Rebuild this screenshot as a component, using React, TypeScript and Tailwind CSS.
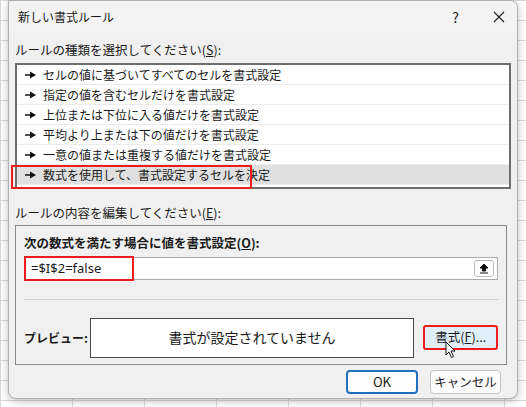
const rules = [
  "セルの値に基づいてすべてのセルを書式設定",
  "指定の値を含むセルだけを書式設定",
  "上位または下位に入る値だけを書式設定",
  "平均より上または下の値だけを書式設定",
  "一意の値または重複する値だけを書式設定",
  "数式を使用して、書式設定するセルを決定",
];

export default function App() {
  return (
    <div
      className="relative h-[407px] w-[526px] overflow-hidden bg-white text-[13px] text-[#1a1a1a] [background-image:linear-gradient(#d9d9d9_1px,transparent_1px),linear-gradient(90deg,#d9d9d9_1px,transparent_1px)] [background-size:72px_20px]"
      style={{ fontFamily: '"Noto Sans CJK JP", "Noto Sans", sans-serif' }}
    >
      <div className="absolute left-[8px] top-0 h-[399px] w-[510px] overflow-hidden rounded-b-[8px] rounded-tr-[8px] border border-[#b0b0b0] bg-[#f0f0f0] shadow-[0_2px_8px_rgba(0,0,0,0.25)]">
        <div className="flex h-[32px] items-center justify-between bg-[#f3f3f3] pl-[9px] pr-[12px]">
          <span className="text-[12px]">新しい書式ルール</span>
          <div className="flex items-center gap-[34px] text-[14px]">
            <span>?</span>
            <svg width="12" height="12" viewBox="0 0 12 12"><path d="M1 1L11 11M11 1L1 11" stroke="#222" strokeWidth="1.1" /></svg>
          </div>
        </div>
        <div className="px-[6px] pt-[8px]">
          <div className="text-[12.5px] leading-[18px]">ルールの種類を選択してください(<u>S</u>):</div>
          <div className="relative mt-[4px] border-2 border-[#6e6e6e] bg-white pb-[2px]">
            {rules.map((r, i) => (
              <div
                key={r}
                className={`flex h-[20px] items-center gap-[6px] border-b border-[#ececec] pl-[8px] text-[12px] ${i === 5 ? "bg-[#e0e0e0]" : ""}`}
              >
                <svg width="12" height="8" viewBox="0 0 12 8"><path d="M0 4H6" stroke="#111" strokeWidth="1.6" /><path d="M5 0.5L11 4L5 7.5Z" fill="#111" /></svg>
                <span>{r}</span>
              </div>
            ))}
            <div className="absolute left-[-6px] top-[100px] h-[24px] w-[241px] border-2 border-[#ee1c1c]" />
          </div>
          <div className="mt-[15px] text-[12.5px] leading-[18px]">ルールの内容を編集してください(<u>E</u>):</div>
          <div className="mr-[4px] mt-[3px] h-[140px] border border-[#888] bg-[#f0f0f0] px-[8px]">
            <div className="mt-[8px] text-[12.5px] font-bold">次の数式を満たす場合に値を書式設定(<u>O</u>):</div>
            <div className="relative mt-[4px] flex h-[23px] items-center justify-between border border-[#ababab] bg-white pl-[6px] pr-[3px]">
              <span className="text-[13px]" style={{ fontFamily: '"Noto Sans", sans-serif' }}>=$I$2=false</span>
              <div className="flex h-[17px] w-[20px] items-center justify-center rounded-[3px] border border-[#bbb] bg-white">
                <svg width="10" height="11" viewBox="0 0 10 11"><path d="M5 1L1 5H3.5V8H6.5V5H9Z M1 10H9" fill="#111" stroke="#111" strokeWidth="1" /></svg>
              </div>
              <div className="absolute left-[-1px] top-[-2px] h-[25px] w-[110px] border-2 border-[#ee1c1c]" />
            </div>
            <div className="mt-[19px] border-t border-[#cfcfcf]" />
            <div className="mt-[18px] flex items-center">
              <span className="w-[66px] whitespace-nowrap text-[12px] font-bold">プレビュー:</span>
              <div className="flex h-[40px] w-[327px] items-center justify-center border border-[#4a4a4a] bg-white text-[14px]">書式が設定されていません</div>
              <div className="relative ml-[9px] flex h-[25px] w-[75px] items-center justify-center rounded-[3px] border-2 border-[#ee1c1c] bg-[#e0eef9] text-[12.5px]">
                書式(<u>F</u>)...
                <svg className="absolute left-[20px] top-[14px]" width="12" height="18" viewBox="0 0 12 18"><path d="M1 1V14L4 11L6.5 16.5L8.5 15.5L6 10H10Z" fill="#fff" stroke="#111" strokeWidth="1" /></svg>
              </div>
            </div>
          </div>
          <div className="mr-[10px] mt-[5px] flex justify-end gap-[12px]">
            <div className="flex h-[24px] w-[72px] items-center justify-center rounded-[4px] border-2 border-[#1f6fbf] bg-[#fdfdfd] text-[13px]">OK</div>
            <div className="flex h-[24px] w-[71px] items-center justify-center rounded-[4px] border border-[#c4c4c4] bg-[#fdfdfd] text-[12.5px]">キャンセル</div>
          </div>
        </div>
      </div>
    </div>
  );
}
